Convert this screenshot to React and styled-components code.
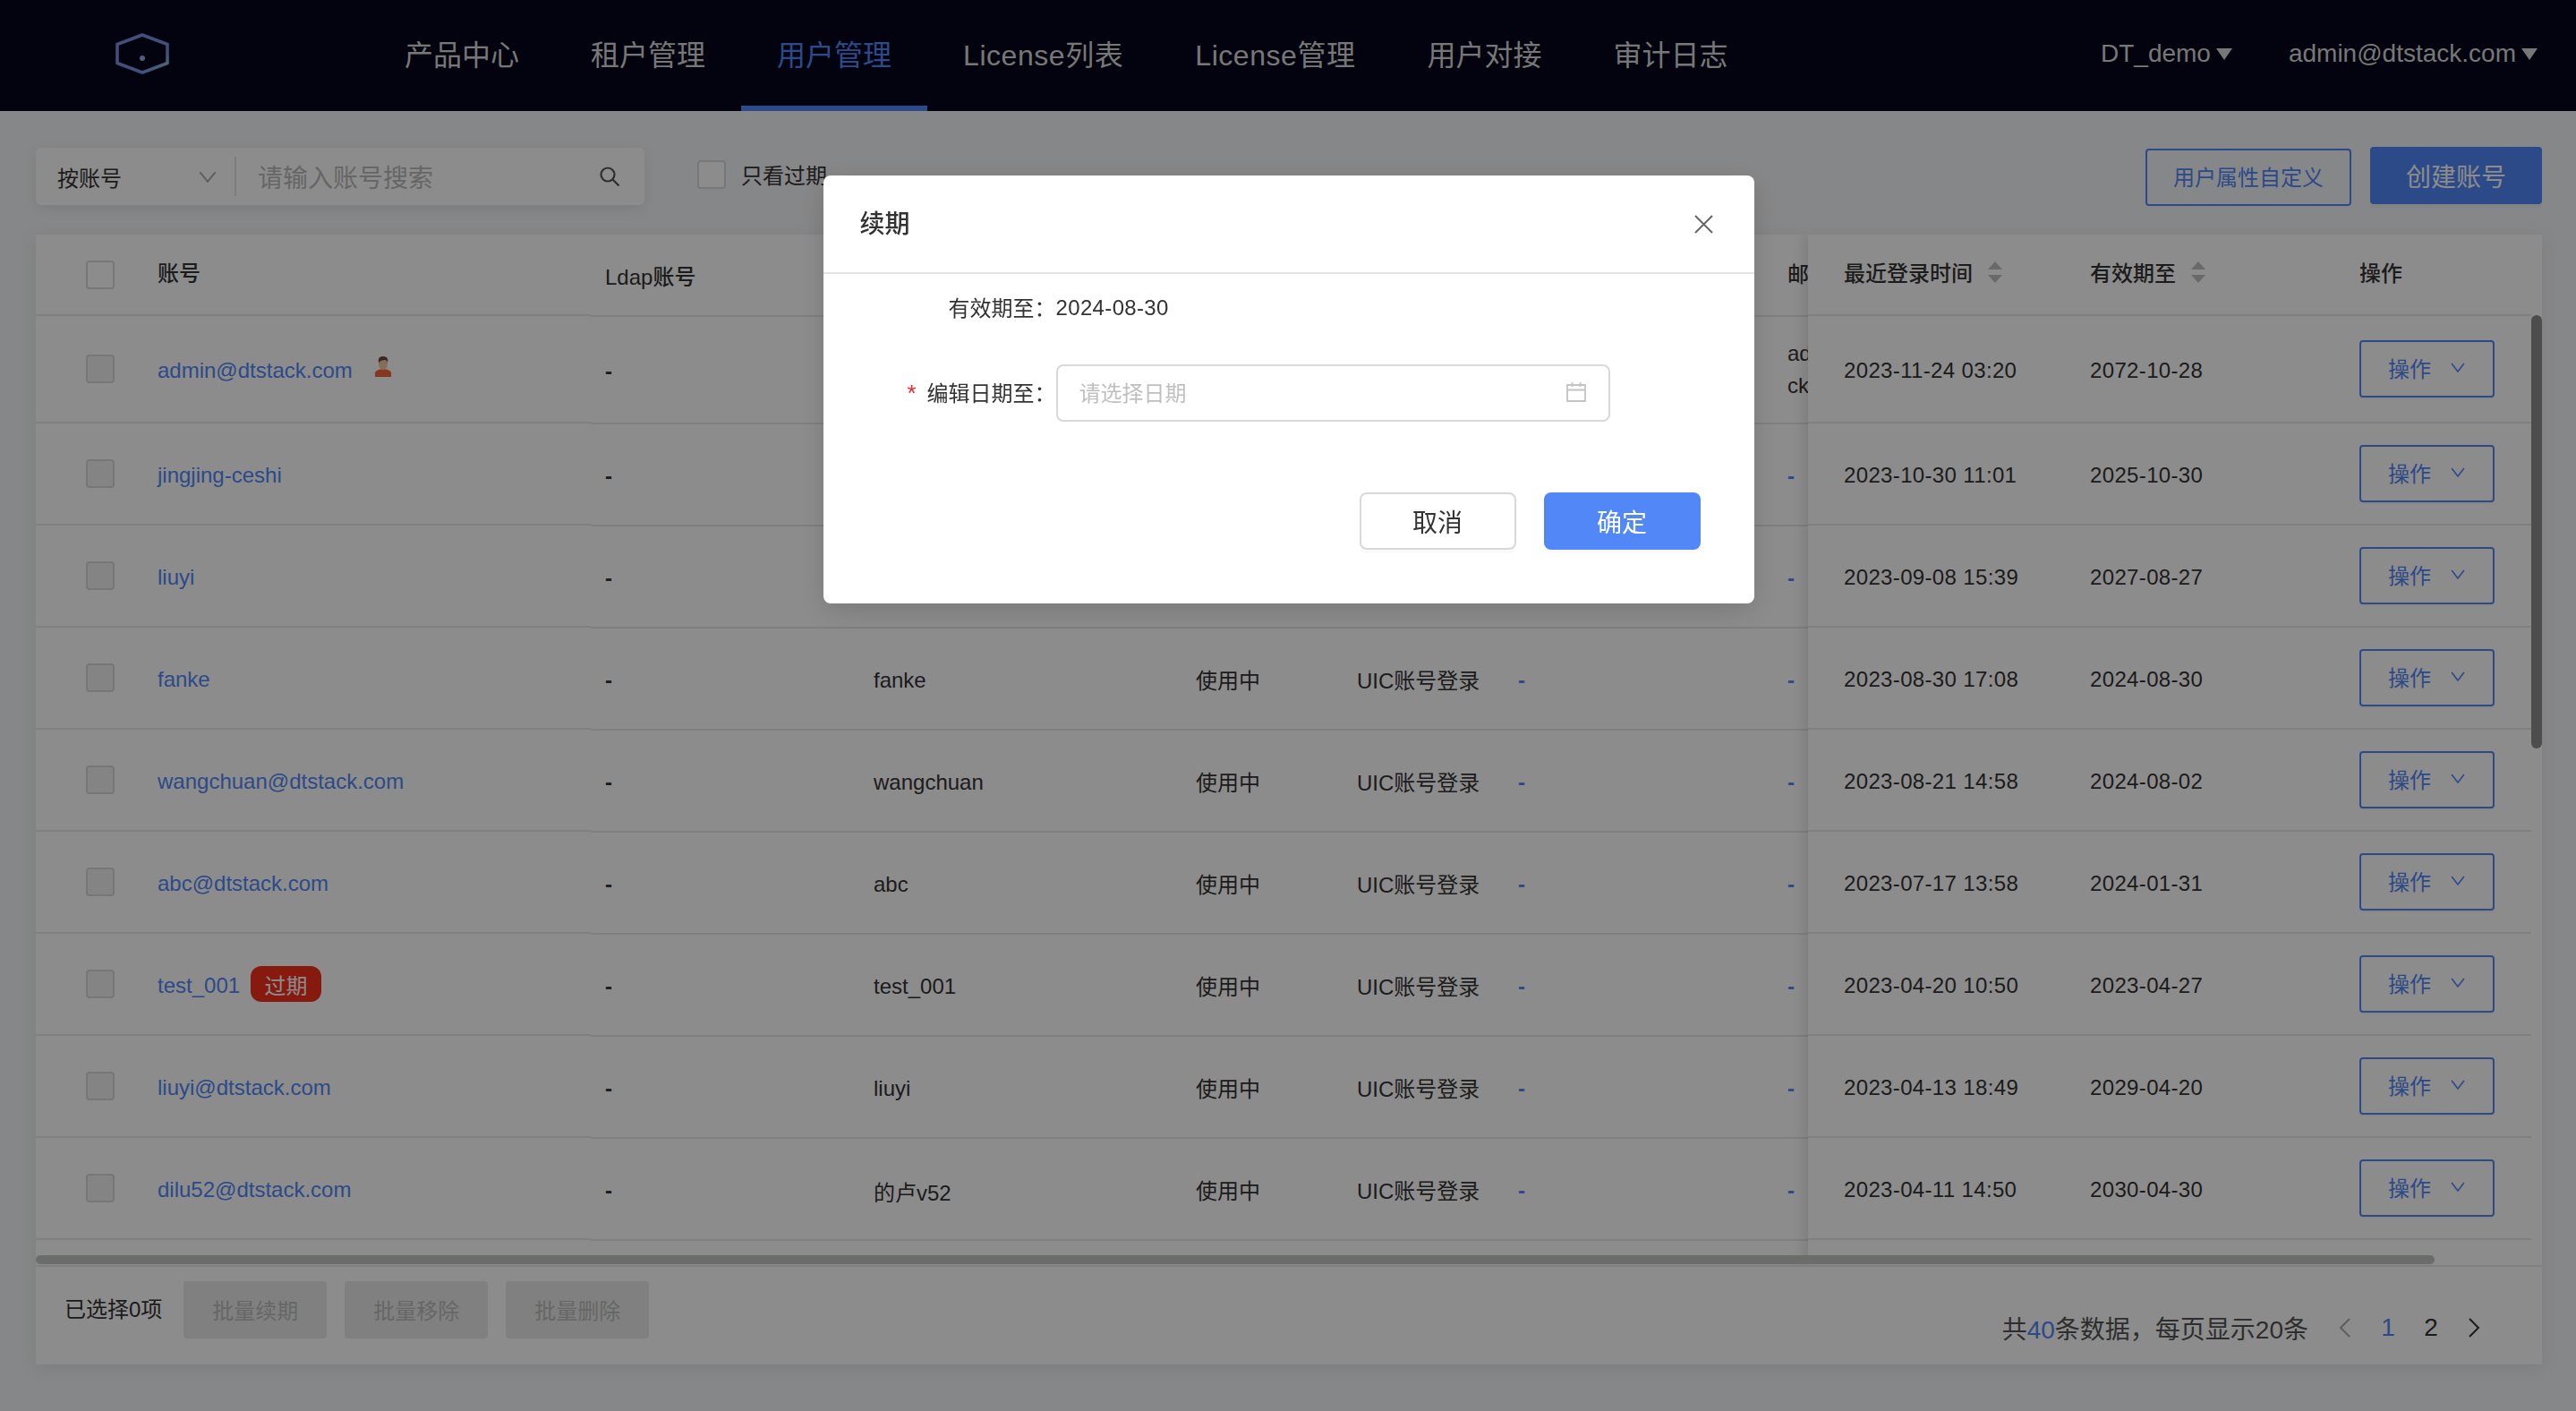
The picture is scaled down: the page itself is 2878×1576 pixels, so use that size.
import styled, { createGlobalStyle } from 'styled-components';

const GlobalStyle = createGlobalStyle`
  html, body {
    margin: 0;
    padding: 0;
    background: #f5f6f8;
    color: #333;
    font-family: "Liberation Sans", "Noto Sans CJK SC", sans-serif;
    font-size: 24px;
  }

  * {
    box-sizing: border-box;
  }
`;

const BLUE = '#5287f8';

const Page = styled.div`
  width: 2878px;
  height: 1576px;
  overflow: hidden;
`;

const TopBar = styled.header`
  display: flex;
  align-items: stretch;
  height: 124px;
  padding-left: 129px;
  padding-right: 43px;
  background: #05071b;
`;

const LogoBox = styled.div`
  display: flex;
  align-items: center;
  width: 283px;
  padding-bottom: 4px;
`;

const NavItem = styled.a`
  display: flex;
  align-items: center;
  padding: 0 40px;
  font-size: 32px;
  letter-spacing: ${(p) => (p.$wide ? '0.55px' : '0')};
  color: ${(p) => (p.$active ? BLUE : '#d9d9d9')};
  border-bottom: 6px solid ${(p) => (p.$active ? BLUE : 'transparent')};
`;

const UserArea = styled.div`
  display: flex;
  align-items: center;
  gap: 63px;
  margin-left: auto;
  padding-bottom: 4px;
`;

const UserItem = styled.span`
  display: flex;
  align-items: center;
  gap: 6px;
  font-size: 28px;
  color: #d9d9d9;
`;

const Main = styled.main`
  padding: 40px 38px 0 40px;
`;

const Toolbar = styled.div`
  display: flex;
  align-items: flex-start;
  height: 66px;
  margin-bottom: 32px;
`;

const SearchBox = styled.div`
  display: flex;
  align-items: center;
  width: 680px;
  height: 64px;
  margin-top: 1px;
  padding: 0 24px;
  background: #fff;
  border-radius: 6px;
  box-shadow: 0 4px 16px rgba(0, 0, 0, 0.08);
`;

const SearchType = styled.div`
  display: flex;
  align-items: center;
  justify-content: space-between;
  width: 200px;
  height: 44px;
  padding-right: 20px;
  color: #333;
  border-right: 2px solid #e4e4e4;
  margin-right: 24px;
`;

const SearchHint = styled.span`
  flex: 1;
  font-size: 28px;
  color: #bbb;
`;

const CheckBox = styled.span`
  display: inline-block;
  flex: none;
  width: 32px;
  height: 32px;
  background: ${(p) => (p.$muted ? '#f1f1f1' : '#fff')};
  border: 2px solid #d9d9d9;
  border-radius: 4px;
`;

const OnlyExpired = styled.label`
  display: flex;
  align-items: center;
  gap: 17px;
  margin-left: 59px;
  margin-top: 13px;
`;

const ToolbarRight = styled.div`
  display: flex;
  align-items: flex-start;
  gap: 21px;
  margin-left: auto;
`;

const OutlineButton = styled.button`
  width: 230px;
  height: 64px;
  margin-top: 2px;
  padding: 0 0 3px;
  background: transparent;
  border: 2px solid ${BLUE};
  border-radius: 4px;
  color: ${BLUE};
  font: inherit;
  font-size: 24px;
`;

const PrimaryButton = styled.button`
  width: ${(p) => p.$width || 192}px;
  height: 64px;
  padding: 0;
  background: ${BLUE};
  border: none;
  border-radius: 4px;
  color: #fff;
  font: inherit;
  font-size: 28px;
  box-shadow: 0 4px 0 rgba(0, 0, 0, 0.03);
`;

const Card = styled.section`
  position: relative;
  width: 2800px;
  height: 1262px;
  background: #fff;
  box-shadow: 0 4px 20px rgba(0, 0, 0, 0.08);
`;

const TableArea = styled.div`
  display: flex;
  height: 1153px;
  overflow: hidden;
  border-bottom: 2px solid #e8e8e8;
`;

const Section = styled.div`
  flex: none;
  width: ${(p) => p.$width}px;
  overflow: hidden;
  ${(p) => p.$fixedRight && 'box-shadow: -6px 0 12px rgba(0, 0, 0, 0.1); position: relative; padding-right: 12px;'}
`;

const Row = styled.div`
  display: grid;
  grid-template-columns: ${(p) => p.$cols};
  align-items: center;
  height: ${(p) => p.$height}px;
  padding-left: ${(p) => p.$pad}px;
  border-bottom: 2px solid #e8e8e8;
`;

const HeadText = styled.span`
  display: flex;
  align-items: center;
  gap: 17px;
  margin-bottom: ${(p) => (p.$low ? 0 : 6)}px;
  white-space: nowrap;
  font-weight: 500;
  color: #333;
`;

const NameCell = styled.span`
  display: flex;
  align-items: center;
  gap: 12px;
`;

const Latin = styled.span`
  padding-top: 4px;
`;

const AccountLink = styled(Latin)`
  color: ${BLUE};
`;

const DateText = styled(Latin)`
  letter-spacing: 0.35px;
`;

const Dash = styled(Latin)`
  font-weight: 700;
  color: ${(p) => (p.$blue ? BLUE : '#333')};
`;

const OwnerMark = styled.span`
  display: flex;
  margin-left: 12px;
  margin-bottom: 6px;
`;

const EmailCell = styled.span`
  display: block;
  width: 148px;
  line-height: 36px;
  word-break: break-all;
  white-space: normal;
`;

const ActionButton = styled.button`
  display: flex;
  align-items: center;
  gap: 22px;
  width: 151px;
  height: 64px;
  padding: 0 0 3px 30px;
  background: transparent;
  border: 2px solid ${BLUE};
  border-radius: 4px;
  color: ${BLUE};
  font: inherit;
  box-shadow: 0 2px 0 rgba(0, 0, 0, 0.03);
`;

const ExpiredTag = styled.span`
  display: inline-flex;
  align-items: center;
  justify-content: center;
  width: 79px;
  height: 40px;
  background: #f4301d;
  border-radius: 12px;
  color: #fff;
`;

const ScrollThumbH = styled.div`
  position: absolute;
  left: 0;
  top: 1140px;
  width: 2680px;
  height: 10px;
  background: #c3c6c4;
  border-radius: 5px;
`;

const ScrollThumbV = styled.div`
  position: absolute;
  right: 0;
  top: 90px;
  width: 12px;
  height: 484px;
  background: #8c8c8c;
  border-radius: 6px;
`;

const Footer = styled.div`
  display: flex;
  align-items: flex-start;
  height: 109px;
  padding: 16px 52px 0 32px;
`;

const SelectedText = styled.span`
  line-height: 64px;
  margin-right: 24px;
`;

const BatchGroup = styled.div`
  display: flex;
  gap: 20px;
`;

const BatchButton = styled.button`
  width: 160px;
  height: 64px;
  padding: 0 0 2px;
  background: #e9e9e9;
  border: none;
  border-radius: 4px;
  color: #bbb;
  font: inherit;
`;

const Pagination = styled.div`
  display: flex;
  align-items: center;
  height: 40px;
  margin-top: 32px;
  margin-left: auto;
  font-size: 28px;
  color: #555;
`;

const TotalText = styled.span`
  margin-right: 17px;
`;

const PageCell = styled.span`
  display: flex;
  align-items: center;
  justify-content: center;
  width: 48px;
  color: ${(p) => (p.$active ? BLUE : '#333')};
`;

const Strong = styled.span`
  color: ${BLUE};
`;

const Mask = styled.div`
  position: fixed;
  inset: 0;
  background: rgba(0, 0, 0, 0.45);
`;

const ModalWrap = styled.div`
  position: fixed;
  inset: 0;
  display: flex;
  justify-content: center;
  align-items: flex-start;
  padding-top: 196px;
  padding-left: 1px;
`;

const Modal = styled.div`
  width: 1040px;
  height: 478px;
  background: #fff;
  border-radius: 8px;
  box-shadow: 0 8px 32px rgba(0, 0, 0, 0.15);
`;

const ModalHeader = styled.div`
  display: flex;
  align-items: center;
  justify-content: space-between;
  height: 110px;
  padding: 0 46px 0 41px;
  border-bottom: 2px solid #e4e4e4;
`;

const ModalTitle = styled.span`
  margin-bottom: 4px;
  font-size: 28px;
  font-weight: 500;
  color: #333;
`;

const FormRow = styled.div`
  display: flex;
  align-items: center;
  margin-top: ${(p) => p.$top}px;
  height: ${(p) => p.$height}px;
`;

const FormLabel = styled.span`
  width: 260px;
  margin-bottom: ${(p) => (p.$lift ? 3 : 0)}px;
  text-align: right;
  white-space: nowrap;
  color: #333;
`;

const Required = styled.span`
  margin-right: 12px;
  font-size: 26px;
  color: #f5222d;
`;

const DateInput = styled.div`
  display: flex;
  align-items: center;
  justify-content: space-between;
  width: 619px;
  height: 64px;
  padding: 0 25px 3px 24px;
  border: 2px solid #d9d9d9;
  border-radius: 8px;
  color: #bfbfbf;
`;

const ModalFooter = styled.div`
  display: flex;
  justify-content: flex-end;
  gap: 31px;
  margin-top: 79px;
  padding-right: 60px;
`;

const DefaultButton = styled.button`
  width: 175px;
  height: 64px;
  padding: 0;
  background: #fff;
  border: 2px solid #d9d9d9;
  border-radius: 8px;
  color: #333;
  font: inherit;
  font-size: 28px;
  box-shadow: 0 4px 0 rgba(0, 0, 0, 0.02);
`;

const OkButton = styled(PrimaryButton)`
  border-radius: 8px;
  box-shadow: 0 4px 0 rgba(0, 0, 0, 0.02);
`;

const Logo = () => (
  <svg width="60" height="46" viewBox="0 0 60 46">
    <defs>
      <linearGradient id="logoStroke" x1="0" y1="0" x2="1" y2="1">
        <stop offset="0" stopColor="#7d8fe0" />
        <stop offset="0.75" stopColor="#7a90dc" />
        <stop offset="1" stopColor="#86e0c8" />
      </linearGradient>
    </defs>
    <path
      d="M30 2 L58 12.500 V33.500 L30 44 L2 33.500 V12.500 Z"
      fill="none"
      stroke="url(#logoStroke)"
      strokeWidth="3.500"
      strokeLinejoin="round"
    />
    <circle cx="30" cy="28" r="3" fill="#9aa6e8" />
  </svg>
);

const Caret = () => (
  <svg width="18" height="13" viewBox="0 0 18 13">
    <path d="M0 0 H18 L9 13 Z" fill="#d9d9d9" />
  </svg>
);

const Chevron = ({ color, width = 16, height = 11 }) => (
  <svg width={width} height={height} viewBox="0 0 15 11" preserveAspectRatio="none">
    <path d="M1 1 L7.500 10 L14 1" fill="none" stroke={color} strokeWidth="1.500" />
  </svg>
);

const SearchIcon = () => (
  <svg width="26" height="26" viewBox="0 0 26 26">
    <circle cx="9" cy="11" r="7.500" fill="none" stroke="#555" strokeWidth="2.200" />
    <path d="M14.500 16.500 L21.500 23.500" stroke="#555" strokeWidth="2.200" />
  </svg>
);

const SortIcon = () => (
  <svg width="16" height="24" viewBox="0 0 16 24">
    <path d="M8 0 L16 9 H0 Z" fill="#bfbfbf" />
    <path d="M8 24 L0 15 H16 Z" fill="#bfbfbf" />
  </svg>
);

const PersonIcon = () => (
  <svg width="20" height="24" viewBox="0 0 20 24">
    <path d="M1 24 V19 Q2 16.500 7 15.500 H13 Q18 16.500 19 19 V24 Z" fill="#f2663a" />
    <ellipse cx="10" cy="9" rx="5" ry="7" fill="#f0c8a4" />
    <path d="M5 8 Q3.500 1 10 1 Q16.500 1 15 8 Q14 4.500 11 5 Q7 5.500 5 8 Z" fill="#6e4a3e" />
  </svg>
);

const CalendarIcon = () => (
  <svg width="22" height="22" viewBox="0 0 22 22">
    <path
      d="M1 3 H21 V21 H1 Z M1 8.500 H21 M6.500 0 V5 M15.500 0 V5"
      fill="none"
      stroke="#c4c4c4"
      strokeWidth="1.800"
    />
  </svg>
);

const CloseIcon = () => (
  <svg width="21" height="21" viewBox="0 0 21 21">
    <path d="M1 1 L20 20 M20 1 L1 20" stroke="#666" strokeWidth="2" />
  </svg>
);

const PageArrow = ({ dir, color }) => (
  <svg width="14" height="22" viewBox="0 0 14 22">
    <path
      d={dir === 'left' ? 'M12 1 L2 11 L12 21' : 'M2 1 L12 11 L2 21'}
      fill="none"
      stroke={color}
      strokeWidth="2"
    />
  </svg>
);

const navItems = ['产品中心', '租户管理', '用户管理', 'License列表', 'License管理', '用户对接', '审计日志'];

const users = [
  { account: 'admin@dtstack.com', name: 'admin', login: '2023-11-24 03:20', expire: '2072-10-28', height: 120, owner: true, email: 'admin@dtstack.com' },
  { account: 'jingjing-ceshi', name: 'jingjing-ceshi', login: '2023-10-30 11:01', expire: '2025-10-30', height: 114 },
  { account: 'liuyi', name: 'liuyi', login: '2023-09-08 15:39', expire: '2027-08-27', height: 114 },
  { account: 'fanke', name: 'fanke', login: '2023-08-30 17:08', expire: '2024-08-30', height: 114 },
  { account: 'wangchuan@dtstack.com', name: 'wangchuan', login: '2023-08-21 14:58', expire: '2024-08-02', height: 114 },
  { account: 'abc@dtstack.com', name: 'abc', login: '2023-07-17 13:58', expire: '2024-01-31', height: 114 },
  { account: 'test_001', name: 'test_001', login: '2023-04-20 10:50', expire: '2023-04-27', height: 114, expired: true },
  { account: 'liuyi@dtstack.com', name: 'liuyi', login: '2023-04-13 18:49', expire: '2029-04-20', height: 114 },
  { account: 'dilu52@dtstack.com', name: '的卢v52', login: '2023-04-11 14:50', expire: '2030-04-30', height: 114 },
];

const LEFT_COLS = '80px 1fr';
const MIDDLE_COLS = '300px 360px 180px 180px 301px 1fr';
const RIGHT_COLS = '275px 301px 1fr';

export default function App() {
  return (
    <Page>
      <GlobalStyle />
      <TopBar>
        <LogoBox>
          <Logo />
        </LogoBox>
        {navItems.map((item) => (
          <NavItem key={item} $active={item === '用户管理'} $wide={item.startsWith('License')}>
            {item}
          </NavItem>
        ))}
        <UserArea>
          <UserItem>
            DT_demo
            <Caret />
          </UserItem>
          <UserItem>
            admin@dtstack.com
            <Caret />
          </UserItem>
        </UserArea>
      </TopBar>

      <Main>
        <Toolbar>
          <SearchBox>
            <SearchType>
              按账号
              <Chevron color="#aaa" width={20} height={13} />
            </SearchType>
            <SearchHint>请输入账号搜索</SearchHint>
            <SearchIcon />
          </SearchBox>
          <OnlyExpired>
            <CheckBox />
            只看过期
          </OnlyExpired>
          <ToolbarRight>
            <OutlineButton>用户属性自定义</OutlineButton>
            <PrimaryButton>创建账号</PrimaryButton>
          </ToolbarRight>
        </Toolbar>

        <Card>
          <TableArea>
            <Section $width={620}>
              <Row $cols={LEFT_COLS} $height={91} $pad={56}>
                <CheckBox />
                <HeadText>账号</HeadText>
              </Row>
              {users.map((user) => (
                <Row key={user.account} $cols={LEFT_COLS} $height={user.height} $pad={56}>
                  <CheckBox $muted />
                  <NameCell>
                    <AccountLink>{user.account}</AccountLink>
                    {user.owner && (
                      <OwnerMark>
                        <PersonIcon />
                      </OwnerMark>
                    )}
                    {user.expired && <ExpiredTag>过期</ExpiredTag>}
                  </NameCell>
                </Row>
              ))}
            </Section>

            <Section $width={1360}>
              <Row $cols={MIDDLE_COLS} $height={92} $pad={16}>
                <HeadText $low>Ldap账号</HeadText>
                <HeadText>姓名</HeadText>
                <HeadText>状态</HeadText>
                <HeadText>登录方式</HeadText>
                <HeadText>手机号</HeadText>
                <HeadText>邮箱</HeadText>
              </Row>
              {users.map((user) => (
                <Row key={user.account} $cols={MIDDLE_COLS} $height={user.height} $pad={16}>
                  <Dash>-</Dash>
                  <Latin>{user.name}</Latin>
                  <span>使用中</span>
                  <span>UIC账号登录</span>
                  <Dash $blue>-</Dash>
                  {user.email ? <EmailCell>{user.email}</EmailCell> : <Dash $blue>-</Dash>}
                </Row>
              ))}
            </Section>

            <Section $width={820} $fixedRight>
              <Row $cols={RIGHT_COLS} $height={91} $pad={40}>
                <HeadText>
                  最近登录时间
                  <SortIcon />
                </HeadText>
                <HeadText>
                  有效期至
                  <SortIcon />
                </HeadText>
                <HeadText>操作</HeadText>
              </Row>
              {users.map((user) => (
                <Row key={user.account} $cols={RIGHT_COLS} $height={user.height} $pad={40}>
                  <DateText>{user.login}</DateText>
                  <DateText>{user.expire}</DateText>
                  <ActionButton>
                    操作
                    <Chevron color={BLUE} />
                  </ActionButton>
                </Row>
              ))}
            </Section>
          </TableArea>
          <ScrollThumbH />
          <ScrollThumbV />

          <Footer>
            <SelectedText>已选择0项</SelectedText>
            <BatchGroup>
              <BatchButton>批量续期</BatchButton>
              <BatchButton>批量移除</BatchButton>
              <BatchButton>批量删除</BatchButton>
            </BatchGroup>
            <Pagination>
              <TotalText>
                共<Strong>40</Strong>条数据，每页显示20条
              </TotalText>
              <PageCell>
                <PageArrow dir="left" color="#aaa" />
              </PageCell>
              <PageCell $active>1</PageCell>
              <PageCell>2</PageCell>
              <PageCell>
                <PageArrow dir="right" color="#333" />
              </PageCell>
            </Pagination>
          </Footer>
        </Card>
      </Main>

      <Mask />

      <ModalWrap>
        <Modal>
          <ModalHeader>
            <ModalTitle>续期</ModalTitle>
            <CloseIcon />
          </ModalHeader>
          <FormRow $top={18} $height={36}>
            <FormLabel>有效期至：</FormLabel>
            <DateText>2024-08-30</DateText>
          </FormRow>
          <FormRow $top={47} $height={64}>
            <FormLabel $lift>
              <Required>*</Required>
              编辑日期至：
            </FormLabel>
            <DateInput>
              请选择日期
              <CalendarIcon />
            </DateInput>
          </FormRow>
          <ModalFooter>
            <DefaultButton>取消</DefaultButton>
            <OkButton $width={175}>确定</OkButton>
          </ModalFooter>
        </Modal>
      </ModalWrap>
    </Page>
  );
}
